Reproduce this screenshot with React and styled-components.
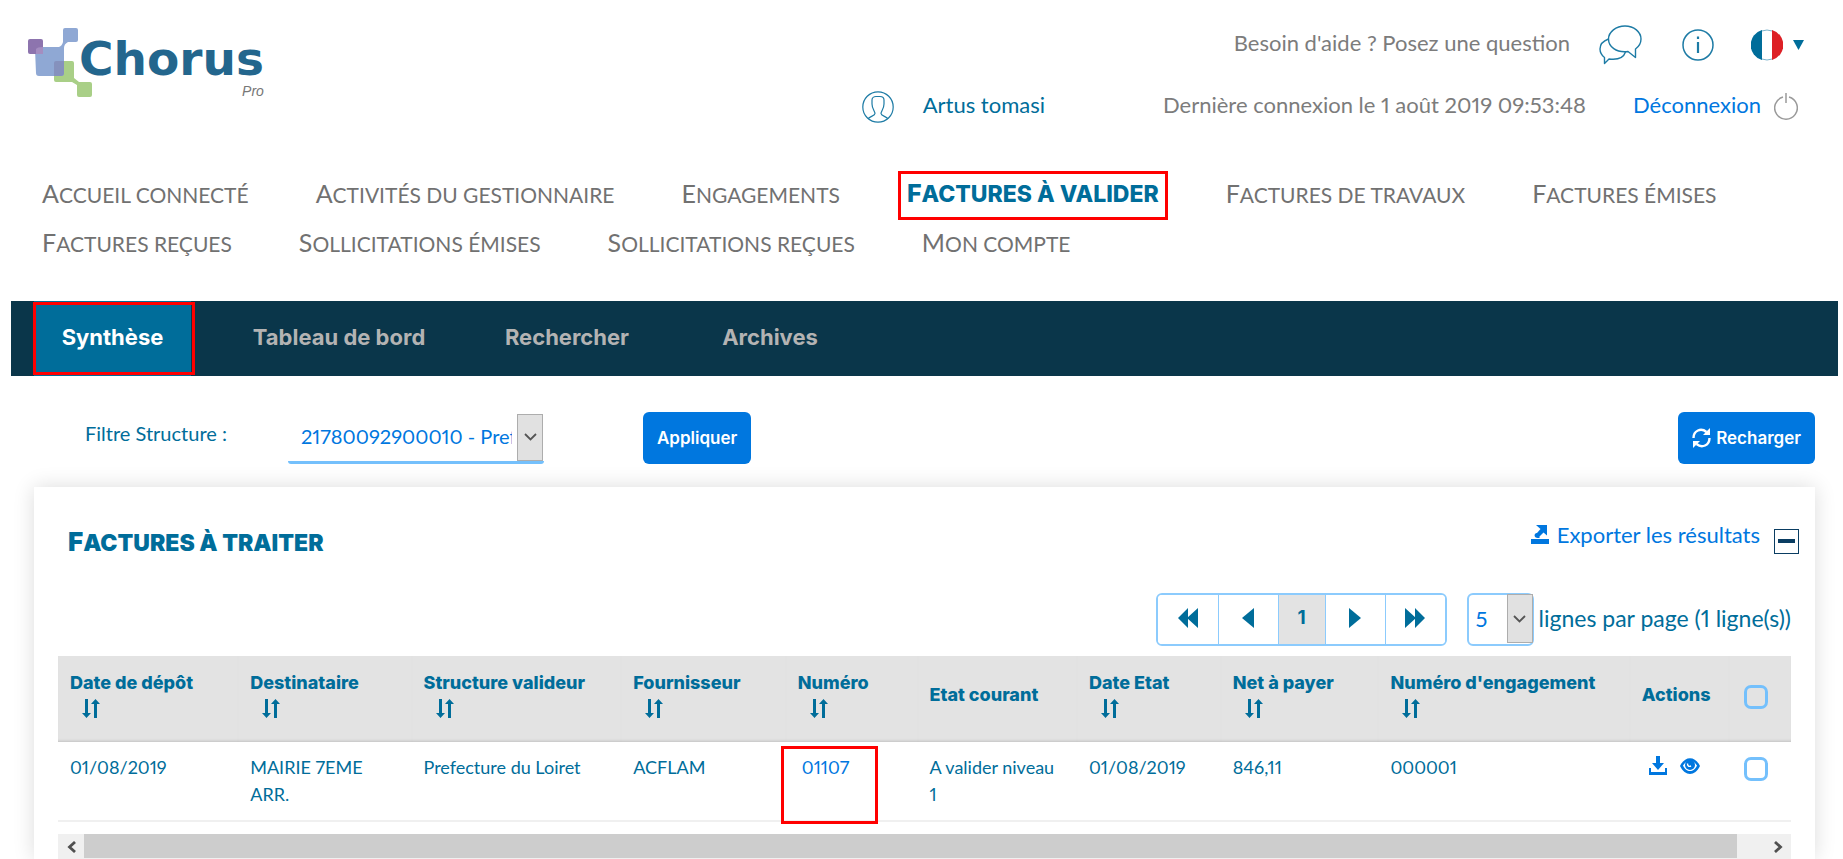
import React from "react";
import styled, { createGlobalStyle } from "styled-components";

const GlobalStyle = createGlobalStyle`
  *, *::before, *::after {
    box-sizing: border-box;
  }
  body {
    margin: 0;
    background: #ffffff;
    color: #006d9a;
    font-family: Lato, "Open Sans", sans-serif;
    font-size: 16px;
    font-variant-numeric: proportional-nums;
  }
  a {
    color: #0077df;
    text-decoration: none;
  }
  button, select, input {
    font-family: inherit;
    font-variant-numeric: inherit;
    margin: 0;
  }
  svg {
    display: block;
    flex: none;
  }
`;

const boldFont = `Inter, "Open Sans", sans-serif`;

const Page = styled.div`
  display: flex;
  flex-direction: column;
  min-height: 100vh;
`;

/* Header */

const Header = styled.header`
  display: flex;
  justify-content: space-between;
  align-items: flex-start;
  padding: 27px 39px 0 28px;
  height: 171px;
`;

const Logo = styled.a`
  display: flex;
  align-items: flex-start;
`;

const LogoWords = styled.span`
  display: flex;
  flex-direction: column;
  margin-left: -13px;
  padding-top: 10px;
`;

const LogoName = styled.span`
  font-family: "DejaVu Sans", sans-serif;
  font-weight: 700;
  font-size: 47px;
  line-height: 44px;
  color: #23668d;
`;

const LogoPro = styled.span`
  align-self: flex-end;
  font-family: "Liberation Sans", sans-serif;
  font-style: italic;
  font-size: 14px;
  line-height: 20px;
  color: #777777;
`;

const HeaderRight = styled.div`
  display: flex;
  flex-direction: column;
  gap: 26px;
`;

const HeaderLine = styled.div`
  display: flex;
  justify-content: flex-end;
  align-items: center;
  height: 36px;
  font-size: 22px;
  line-height: 28px;
  color: #7c7c7c;
`;

const HeaderText = styled.span`
  padding-bottom: 4px;
`;

const HelpLink = styled.a`
  color: #7c7c7c;
  padding-bottom: 4px;
  margin-right: 29px;
`;

const IconButton = styled.button`
  display: flex;
  align-items: center;
  gap: 10px;
  padding: 0;
  border: 0;
  background: none;
  margin-right: ${(props) => props.$right || "0"};
`;

const UserName = styled.a`
  display: flex;
  align-items: center;
  gap: 29px;
  color: #006d9a;
  margin-right: 118px;
`;

const LastLogin = styled.span`
  padding-bottom: 4px;
  margin-right: 47px;
`;

const Logout = styled.a`
  display: flex;
  align-items: center;
  gap: 13px;
  margin-right: 6px;
`;

/* Main navigation */

const MainNav = styled.nav`
  display: flex;
  flex-wrap: wrap;
  column-gap: 67px;
  padding: 0 80px 0 42px;
  margin-bottom: 32px;
`;

const NavItem = styled.a`
  position: relative;
  display: block;
  height: 49px;
  line-height: 45px;
  font-family: ${(props) => (props.$active ? boldFont : "inherit")};
  font-size: ${(props) => (props.$active ? "23px" : "21px")};
  font-weight: ${(props) => (props.$active ? 800 : 400)};
  color: ${(props) => (props.$active ? "#006d9a" : "#717171")};
  text-transform: uppercase;
  white-space: nowrap;

  &::first-letter {
    font-size: 25px;
  }
`;

const Highlight = styled.span`
  position: absolute;
  inset: ${(props) => props.$inset};
  border: 3px solid #ff0000;
  pointer-events: none;
`;

/* Second level tabs */

const TabBar = styled.nav`
  display: flex;
  height: 75px;
  margin: 0 5px 0 11px;
  padding-left: 23px;
  background: #0a364a;
`;

const Tab = styled.a`
  position: relative;
  display: flex;
  justify-content: center;
  align-items: center;
  width: ${(props) => props.$width};
  margin-right: ${(props) => (props.$active ? "34px" : "0")};
  padding-bottom: 3px;
  font-family: ${boldFont};
  font-size: 22px;
  font-weight: 700;
  color: ${(props) => (props.$active ? "#ffffff" : "#b3b3b3")};
  background: ${(props) => (props.$active ? "#006d9a" : "transparent")};
`;

/* Filter */

const FilterBar = styled.form`
  display: flex;
  align-items: center;
  padding: 36px 28px 0 85px;
  margin-bottom: 23px;
`;

const FilterLabel = styled.label`
  width: 203px;
  padding-bottom: 10px;
  font-size: 20px;
`;

const SelectBox = styled.span`
  position: relative;
  display: inline-flex;
`;

const StructureSelect = styled.select`
  appearance: none;
  width: 256px;
  height: 51px;
  padding: 0 32px 2px 13px;
  border: 0;
  border-bottom: 3px solid #74c0fc;
  border-radius: 3px;
  background: #ffffff;
  color: #0077df;
  font-size: 20px;
`;

const PageSizeSelect = styled.select`
  appearance: none;
  width: 67px;
  height: 53px;
  padding: 0 28px 2px 7px;
  border: 2px solid #8ccbfd;
  border-radius: 6px;
  background: #ffffff;
  color: #0077df;
  font-size: 22px;
`;

const SelectArrow = styled.span`
  position: absolute;
  top: 1px;
  right: 1px;
  bottom: 3px;
  width: 26px;
  display: flex;
  justify-content: center;
  align-items: center;
  border: 1px solid #adadad;
  background: #e1e1e1;
  pointer-events: none;
`;

const BlueButton = styled.button`
  display: flex;
  align-items: center;
  justify-content: center;
  gap: 5px;
  height: 52px;
  padding: 0 14px;
  border: 0;
  border-radius: 6px;
  background: #0077df;
  color: #ffffff;
  font-family: ${boldFont};
  font-size: 17px;
  font-weight: 600;
  margin-left: ${(props) => props.$left};
`;

/* Card */

const Card = styled.section`
  flex: 1;
  margin: 0 28px 0 34px;
  padding: 29px 24px 0;
  background: #ffffff;
  box-shadow: 0 0 20px rgba(0, 0, 0, 0.14);
`;

const CardHead = styled.div`
  display: flex;
  align-items: center;
  justify-content: space-between;
  height: 50px;
  margin: 0 -8px 27px 10px;
`;

const CardTitle = styled.h2`
  margin: 0;
  font-family: ${boldFont};
  font-size: 23px;
  font-weight: 900;
  text-transform: uppercase;

  &::first-letter {
    font-size: 26px;
  }
`;

const CardTools = styled.div`
  display: flex;
  align-items: center;
  gap: 14px;
`;

const ExportLink = styled.a`
  display: flex;
  align-items: center;
  gap: 8px;
  padding-bottom: 14px;
  font-size: 22px;
`;

const CollapseButton = styled.button`
  display: flex;
  align-items: center;
  justify-content: center;
  width: 25px;
  height: 25px;
  padding: 0;
  border: 1px solid #0a3d62;
  background: #ffffff;

  &::before {
    content: "";
    width: 17px;
    height: 4px;
    background: #0a3d62;
  }
`;

const PagingRow = styled.div`
  display: flex;
  justify-content: flex-end;
  align-items: center;
  margin-bottom: 10px;
`;

const Pager = styled.div`
  display: flex;
  height: 53px;
  margin-right: 20px;
  border: 2px solid #8ccbfd;
  border-radius: 6px;
  overflow: hidden;
`;

const PagerButton = styled.button`
  display: flex;
  align-items: center;
  justify-content: center;
  width: ${(props) => (props.$current ? "47px" : "60px")};
  padding: 0 0 4px;
  border: 0;
  border-left: 1px solid #8ccbfd;
  background: ${(props) => (props.$current ? "#e3e3e3" : "#ffffff")};
  color: #006d9a;
  font-family: ${boldFont};
  font-size: 19px;
  font-weight: 700;

  &:first-child {
    border-left: 0;
  }
`;

const PageSizeLabel = styled.label`
  padding: 0 0 3px 5px;
  font-size: 23px;
`;

const Table = styled.table`
  width: 100%;
  table-layout: fixed;
  border-collapse: collapse;
`;

const HeadCell = styled.th`
  height: 86px;
  padding: 0 12px 8px;
  background: #e3e3e3;
  box-shadow: inset 0 -3px 3px -2px rgba(0, 0, 0, 0.15);
  font-family: ${boldFont};
  font-size: 18px;
  font-weight: 800;
  line-height: 26px;
  text-align: left;
  white-space: nowrap;
  vertical-align: middle;
`;

const SortButton = styled.button`
  display: block;
  height: 24px;
  padding: 0 12px;
  border: 0;
  background: none;
`;

const Cell = styled.td`
  position: relative;
  height: 79px;
  padding: 12px;
  border-bottom: 2px solid #f0f0f0;
  font-size: 18px;
  line-height: 27px;
  vertical-align: top;
`;

const NumberLink = styled.a`
  padding-left: 4px;
`;

const RowActions = styled.div`
  display: flex;
  align-items: center;
  gap: 13px;
  padding: 2px 7px;
`;

const Checkbox = styled.input`
  appearance: none;
  display: block;
  width: 24px;
  height: 24px;
  margin: 3px 0 0 3px;
  border: 3px solid #74c0fc;
  border-radius: 7px;
  background: transparent;
`;

const ScrollTrack = styled.div`
  display: flex;
  height: 25px;
  margin-top: 12px;
  background: #f0f0f0;
`;

const ScrollButton = styled.button`
  display: flex;
  align-items: center;
  justify-content: center;
  width: 26px;
  padding: 0;
  border: 0;
  background: #f0f0f0;
`;

const ScrollThumb = styled.div`
  flex: 1;
  height: 24px;
  margin-right: 28px;
  background: #cdcdcd;
`;

/* Drawings */

const LogoMark = () => (
  <svg width="64" height="70" viewBox="0 0 64 70">
    <path d="M28 34 H44 Q46 34 46 36 V51 L51 55 H62 Q64 55 64 57 V68 Q64 70 62 70 H51 Q49 70 49 68 V58 L44 55 H28 Q26 55 26 53 V36 Q26 34 28 34 Z" fill="#a9cf87" />
    <path d="M7 22 Q7 20 9 20 H31 Q34 19 35 15 V3 Q35 1 37 1 H48 Q50 1 50 3 V13 Q50 15 48 15 H40 Q36 17 36 21 V46 Q36 49 33 49 H11 Q8 49 8 46 Z" fill="#8fa8d4" />
    <path d="M26 36 Q26 34 28 34 H36 V46 Q36 49 33 49 H26 Z" fill="#8591bd" />
    <rect x="0" y="12" width="15" height="15" rx="2" fill="#8d74ae" />
    <path d="M8 22 Q9 20 15 20 V27 H8 Z" fill="#a48dc0" />
  </svg>
);

const ChatIcon = () => (
  <svg width="43" height="40" viewBox="0 0 43 40" fill="none" stroke="#1d7ba5" strokeWidth="1.4" strokeLinejoin="round">
    <path d="M26 1 C35 1 42 7 42 14 C42 18.500 40 21.500 36.500 24 V32.500 L29 26.500 C17 28 9.500 21.500 9.500 14 C9.500 7 17 1 26 1 Z" />
    <path d="M9.500 14 C4 16 1 19.500 1 24 C1 28 3 30.500 5.500 32.500 V38.500 L10 34 C18 35 24.500 33 26.500 27" />
  </svg>
);

const InfoIcon = () => (
  <svg width="32" height="32" viewBox="0 0 32 32" fill="none" stroke="#1d7ba5">
    <circle cx="16" cy="16" r="15" strokeWidth="1.500" />
    <path d="M16 13 V24" strokeWidth="2.200" />
    <path d="M16 7.500 V10" strokeWidth="2.200" />
  </svg>
);

const FlagIcon = () => (
  <svg width="32" height="32" viewBox="0 0 32 32">
    <circle cx="16" cy="16" r="15" fill="#ffffff" stroke="#7db4cc" />
    <path d="M11 1 A15.600 15.600 0 0 0 11 31 Z" fill="#006d9a" />
    <path d="M21 1 A15.600 15.600 0 0 1 21 31 Z" fill="#dd2026" />
  </svg>
);

const CaretIcon = () => (
  <svg width="11" height="10" viewBox="0 0 11 10">
    <path d="M0 0 H11 L5.500 10 Z" fill="#006d9a" />
  </svg>
);

const UserIcon = () => (
  <svg width="32" height="32" viewBox="0 0 32 32" fill="none" stroke="#1d7ba5" strokeWidth="1.2">
    <circle cx="16" cy="16" r="15.200" />
    <path d="M6 28 C7 25.500 13 25 13 22.500 C13 20.500 10 18 10 13 V9 C10 7 12 5.500 14 5.500 H18 C20.500 5.500 22 7 22 9 V13 C22 18 19 20.500 19 22.500 C19 25 25 25.500 26 28" />
  </svg>
);

const PowerIcon = () => (
  <svg width="24" height="28" viewBox="0 0 24 28" fill="none" stroke="#9a9a9a" strokeWidth="1.500">
    <path d="M9 4 A11.300 11.300 0 1 0 15 4" />
    <path d="M12 0 V10" />
  </svg>
);

const ChevronDown = () => (
  <svg width="13" height="8" viewBox="0 0 13 8" fill="none" stroke="#555555" strokeWidth="1.800">
    <path d="M1 1 L6.500 6.500 L12 1" />
  </svg>
);

const RefreshIcon = () => (
  <svg width="19" height="20" viewBox="0 0 19 20" fill="none" stroke="#ffffff" strokeWidth="2.400">
    <path d="M1.500 10 C1.500 2.500 9 -0.500 14.500 4" />
    <path d="M17.500 10 C17.500 17.500 10 20.500 4.500 16" />
    <path d="M18 0 V7 H11 Z" fill="#ffffff" stroke="none" />
    <path d="M1 20 V13 H8 Z" fill="#ffffff" stroke="none" />
  </svg>
);

const ExportIcon = () => (
  <svg width="18" height="19" viewBox="0 0 18 19" fill="#0077df">
    <path d="M0 14 H18 V19 H0 Z" />
    <path d="M5 0 H16 V10.500 L12.500 7.500 L9 11 C8 12 8 12.500 9 13 C5 13.500 2.500 11.500 4 9 C4.500 8 5.500 8 6 8 L9.500 4 Z" />
  </svg>
);

const SortIcon = () => (
  <svg width="18" height="19" viewBox="0 0 18 19" fill="#006d9a">
    <path d="M3 0 H6 V14 H9 L4.500 19 L0 14 H3 Z" />
    <path d="M12 19 H15 V5 H18 L13.500 0 L9 5 H12 Z" />
  </svg>
);

const ArrowIcon = ({ back, double }) => (
  <svg width={double ? 20 : 12} height="20" viewBox={double ? "0 0 20 20" : "0 0 12 20"} fill="#006d9a">
    {double && <path d={back ? "M0 10 L10 0 V20 Z M9 10 L20 0 V20 Z" : "M20 10 L10 0 V20 Z M11 10 L0 0 V20 Z"} />}
    {!double && <path d={back ? "M0 10 L12 0 V20 Z" : "M12 10 L0 0 V20 Z"} />}
  </svg>
);

const DownloadIcon = () => (
  <svg width="18" height="19" viewBox="0 0 18 19" fill="#0077df">
    <path d="M7 0 H11 V7 H15 L9 14 L3 7 H7 Z" />
    <path d="M0 12 H2 V16 H16 V12 H18 V19 H0 Z" />
  </svg>
);

const EyeIcon = () => (
  <svg width="20" height="16" viewBox="0 0 20 16">
    <path d="M0 8 C5 -2.500 15 -2.500 20 8 C15 18.500 5 18.500 0 8 Z" fill="#0077df" />
    <path d="M3 7.500 C5 4.500 7 3 10 3 C13 3 15 4.500 17 7.500 C15 11.500 13 13 10 13 C7 13 5 11.500 3 7.500 Z" fill="#ffffff" />
    <circle cx="10" cy="7" r="5" fill="#0077df" />
    <path d="M7.500 5.500 C7.500 8 9 9 11 8" fill="none" stroke="#ffffff" strokeWidth="1.400" />
  </svg>
);

const ScrollArrow = ({ back }) => (
  <svg width="9" height="12" viewBox="0 0 9 12" fill="none" stroke="#505050" strokeWidth="2.800">
    <path d={back ? "M8 1 L2.500 6 L8 11" : "M1 1 L6.500 6 L1 11"} />
  </svg>
);

const navItems = [
  "Accueil connecté",
  "Activités du gestionnaire",
  "Engagements",
  "Factures à valider",
  "Factures de travaux",
  "Factures émises",
  "Factures reçues",
  "Sollicitations émises",
  "Sollicitations reçues",
  "Mon compte",
];

const tabs = [
  { label: "Synthèse", width: "157px" },
  { label: "Tableau de bord", width: "228px" },
  { label: "Rechercher", width: "228px" },
  { label: "Archives", width: "178px" },
];

const columns = [
  { label: "Date de dépôt", width: "10.4%", sortable: true },
  { label: "Destinataire", width: "10%", sortable: true },
  { label: "Structure valideur", width: "12.1%", sortable: true },
  { label: "Fournisseur", width: "9.5%", sortable: true },
  { label: "Numéro", width: "7.6%", sortable: true },
  { label: "Etat courant", width: "9.2%" },
  { label: "Date Etat", width: "8.3%", sortable: true },
  { label: "Net à payer", width: "9.1%", sortable: true },
  { label: "Numéro d'engagement", width: "14.5%", sortable: true },
  { label: "Actions", width: "5.7%" },
];

const App = () => {
  return (
    <>
      <GlobalStyle />
      <Page>
        <Header>
          <Logo href="#accueil">
            <LogoMark />
            <LogoWords>
              <LogoName>Chorus</LogoName>
              <LogoPro>Pro</LogoPro>
            </LogoWords>
          </Logo>
          <HeaderRight>
            <HeaderLine>
              <HelpLink href="#aide">Besoin d'aide ? Posez une question</HelpLink>
              <IconButton aria-label="Discussion" $right="40px">
                <ChatIcon />
              </IconButton>
              <IconButton aria-label="Informations" $right="37px">
                <InfoIcon />
              </IconButton>
              <IconButton aria-label="Langue">
                <FlagIcon />
                <CaretIcon />
              </IconButton>
            </HeaderLine>
            <HeaderLine>
              <UserName href="#compte">
                <UserIcon />
                <HeaderText>Artus tomasi</HeaderText>
              </UserName>
              <LastLogin>Dernière connexion le 1 août 2019 09:53:48</LastLogin>
              <Logout href="#deconnexion">
                <HeaderText>Déconnexion</HeaderText>
                <PowerIcon />
              </Logout>
            </HeaderLine>
          </HeaderRight>
        </Header>

        <MainNav>
          {navItems.map((item) => {
            const active = item === "Factures à valider";
            return (
              <NavItem key={item} href="#" $active={active}>
                {item}
                {active && <Highlight $inset="0 -9px" />}
              </NavItem>
            );
          })}
        </MainNav>

        <TabBar>
          {tabs.map((tab, index) => (
            <Tab key={tab.label} href="#" $width={tab.width} $active={index === 0}>
              {tab.label}
              {index === 0 && <Highlight $inset="1px -4px 1px -1px" />}
            </Tab>
          ))}
        </TabBar>

        <FilterBar onSubmit={(e) => e.preventDefault()}>
          <FilterLabel htmlFor="structure">Filtre Structure :</FilterLabel>
          <SelectBox>
            <StructureSelect id="structure">
              <option>21780092900010 - Prefecture du Loiret</option>
            </StructureSelect>
            <SelectArrow>
              <ChevronDown />
            </SelectArrow>
          </SelectBox>
          <BlueButton type="submit" $left="99px">
            Appliquer
          </BlueButton>
          <BlueButton type="button" $left="auto">
            <RefreshIcon />
            Recharger
          </BlueButton>
        </FilterBar>

        <Card>
          <CardHead>
            <CardTitle>Factures à traiter</CardTitle>
            <CardTools>
              <ExportLink href="#export">
                <ExportIcon />
                Exporter les résultats
              </ExportLink>
              <CollapseButton aria-label="Réduire" />
            </CardTools>
          </CardHead>

          <PagingRow>
            <Pager>
              <PagerButton aria-label="Première page">
                <ArrowIcon back double />
              </PagerButton>
              <PagerButton aria-label="Page précédente">
                <ArrowIcon back />
              </PagerButton>
              <PagerButton $current>1</PagerButton>
              <PagerButton aria-label="Page suivante">
                <ArrowIcon />
              </PagerButton>
              <PagerButton aria-label="Dernière page">
                <ArrowIcon double />
              </PagerButton>
            </Pager>
            <SelectBox>
              <PageSizeSelect id="page-size">
                <option>5</option>
              </PageSizeSelect>
              <SelectArrow>
                <ChevronDown />
              </SelectArrow>
            </SelectBox>
            <PageSizeLabel htmlFor="page-size">lignes par page (1 ligne(s))</PageSizeLabel>
          </PagingRow>

          <Table>
            <colgroup>
              {columns.map((column) => (
                <col key={column.label} style={{ width: column.width }} />
              ))}
              <col />
            </colgroup>
            <thead>
              <tr>
                {columns.map((column) => (
                  <HeadCell key={column.label} scope="col">
                    {column.label}
                    {column.sortable && (
                      <SortButton aria-label={`Trier par ${column.label}`}>
                        <SortIcon />
                      </SortButton>
                    )}
                  </HeadCell>
                ))}
                <HeadCell scope="col">
                  <Checkbox type="checkbox" aria-label="Tout sélectionner" />
                </HeadCell>
              </tr>
            </thead>
            <tbody>
              <tr>
                <Cell>01/08/2019</Cell>
                <Cell>MAIRIE 7EME ARR.</Cell>
                <Cell>Prefecture du Loiret</Cell>
                <Cell>ACFLAM</Cell>
                <Cell>
                  <NumberLink href="#01107">01107</NumberLink>
                  <Highlight $inset="4px 40px -4px -5px" />
                </Cell>
                <Cell>A valider niveau 1</Cell>
                <Cell>01/08/2019</Cell>
                <Cell>846,11</Cell>
                <Cell>000001</Cell>
                <Cell>
                  <RowActions>
                    <a href="#telecharger" aria-label="Télécharger">
                      <DownloadIcon />
                    </a>
                    <a href="#consulter" aria-label="Consulter">
                      <EyeIcon />
                    </a>
                  </RowActions>
                </Cell>
                <Cell>
                  <Checkbox type="checkbox" aria-label="Sélectionner 01107" />
                </Cell>
              </tr>
            </tbody>
          </Table>
          <ScrollTrack>
            <ScrollButton aria-label="Défiler à gauche">
              <ScrollArrow back />
            </ScrollButton>
            <ScrollThumb />
            <ScrollButton aria-label="Défiler à droite">
              <ScrollArrow />
            </ScrollButton>
          </ScrollTrack>
        </Card>
      </Page>
    </>
  );
};

export default App;
